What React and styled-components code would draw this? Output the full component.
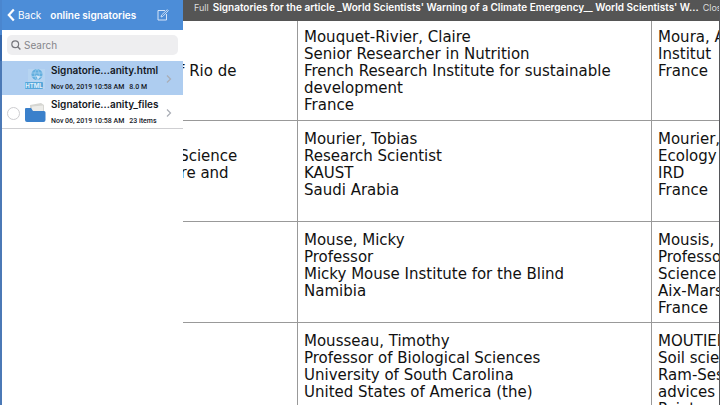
import React from 'react';
import styled, { createGlobalStyle } from 'styled-components';

const GlobalStyle = createGlobalStyle`
  * {
    box-sizing: border-box;
  }

  body {
    margin: 0;
    overflow: hidden;
    background: #ffffff;
  }

  button,
  input {
    border: 0;
    padding: 0;
    background: none;
    font: inherit;
    color: inherit;
  }
`;

export default function App() {
  return (
    <Screen>
      <GlobalStyle />
      <Sidebar>
        <NavBar>
          <BackButton type="button">
            <BackIcon />
            Back
          </BackButton>
          <NavTitle>online signatories</NavTitle>
          <EditButton type="button" aria-label="Edit">
            <EditIcon />
          </EditButton>
        </NavBar>
        <SearchBox>
          <SearchIcon />
          <SearchInput type="search" placeholder="Search" aria-label="Search" />
        </SearchBox>
        <FileList>
          {files.map((file) => (
            <FileRow key={file.name} $selected={file.selected}>
              {file.selected ? (
                <span />
              ) : (
                <Tick type="checkbox" aria-label={file.name} />
              )}
              {file.folder ? <FolderIcon /> : <HtmlIcon />}
              <FileText>
                <FileName>{file.name}</FileName>
                <FileMeta>
                  <span>{file.date}</span>
                  <span>{file.size}</span>
                </FileMeta>
              </FileText>
              <Chevron />
            </FileRow>
          ))}
        </FileList>
      </Sidebar>
      <Viewer>
        <TitleBar>
          <BarButton type="button">Full</BarButton>
          <DocTitle>
            Signatories for the article _World Scientists' Warning of a Climate
            Emergency__ World Scientists' W...
          </DocTitle>
          <BarButton type="button">Close</BarButton>
        </TitleBar>
        <Page>
          <Table>
            <tbody>
              {rows.map((row) => (
                <tr key={row[1][0]}>
                  {row.map((lines, i) => (
                    <Cell key={i}>
                      {lines.map((line, j) => (
                        <Line key={j}>{line}</Line>
                      ))}
                    </Cell>
                  ))}
                </tr>
              ))}
            </tbody>
          </Table>
        </Page>
      </Viewer>
    </Screen>
  );
}

function BackIcon() {
  return (
    <svg width="8" height="14" viewBox="0 0 8 14" fill="none">
      <path d="M6.800 1.500L1.800 7l5 5.500" stroke="#fff" strokeWidth="2.200" />
    </svg>
  );
}

function EditIcon() {
  return (
    <svg width="12" height="12" viewBox="0 0 12 12" fill="none" stroke="#d5e4f7">
      <path d="M8 1.500H1v9.500h8.500V5" />
      <path d="M4 8l.6-2L10.300.7l1 1L5.800 7.400z" strokeWidth="0.9" />
    </svg>
  );
}

function SearchIcon() {
  return (
    <svg width="10" height="10" viewBox="0 0 10 10" fill="none" stroke="#77777c">
      <circle cx="4.200" cy="4.200" r="3.400" strokeWidth="1.200" />
      <path d="M6.700 6.700L9.400 9.400" strokeWidth="1.400" />
    </svg>
  );
}

function HtmlIcon() {
  return (
    <svg width="22" height="22" viewBox="0 0 22 22">
      <rect x="3" y="1" width="17" height="20" fill="#b6d4f1" />
      <circle cx="12" cy="6.500" r="5.500" fill="#62aede" />
      <path
        d="M7 5h10M7 8.500h10M12 1c-3 3-3 8 0 11M12 1c3 3 3 8 0 11"
        fill="none"
        stroke="#a9d2f0"
        strokeWidth="0.7"
      />
      <path d="M11 7l5 2-2 1-1 2z" fill="#d3e7f8" />
      <rect x="0" y="14" width="18" height="7" rx="1" fill="#56a7da" />
      <text
        x="9"
        y="19.500"
        textAnchor="middle"
        fontFamily="Inter, sans-serif"
        fontSize="6"
        fontWeight="700"
        fill="#e3f2fd"
      >
        HTML
      </text>
    </svg>
  );
}

function FolderIcon() {
  return (
    <svg width="22" height="22" viewBox="0 0 22 22">
      <path d="M5 3l11-2 3 2v8H5z" fill="#d6d6d2" />
      <path d="M7 4.500l11-1v8H7z" fill="#ecece9" />
      <path
        d="M0 7q0-1 1-1h5l2 3h11q1.500 0 1.500 1.500V18q0 2-2 2H2q-2 0-2-2z"
        fill="#3a80cb"
      />
    </svg>
  );
}

function Chevron() {
  return (
    <svg width="6" height="10" viewBox="0 0 6 10" fill="none">
      <path d="M1 1.500L4.500 5 1 8.500" stroke="#a9adb5" strokeWidth="1.200" />
    </svg>
  );
}

let uiFont = `Inter, 'Liberation Sans', sans-serif`;

let Screen = styled.div`
  display: grid;
  grid-template-columns: 183px minmax(0, 1fr);
  height: 100vh;
  overflow: hidden;
  border-right: 1px solid #55565a;
`;

let Sidebar = styled.aside`
  padding-left: 2px;
  background: linear-gradient(#4a86cf 35px, #3567ab 35px 61px, #4b79b6 61px)
    0 0 / 2px 100% no-repeat #ffffff;
  font-family: ${uiFont};
`;

let NavBar = styled.header`
  display: flex;
  align-items: center;
  height: 30px;
  padding: 0 14px 0 5px;
  background: #4c8dd8;
  color: #ffffff;
`;

let BackButton = styled.button`
  display: flex;
  align-items: center;
  gap: 3px;
  font-size: 10px;
`;

let NavTitle = styled.h1`
  flex: 1;
  margin: 0 0 0 9px;
  font-size: 10px;
  font-weight: 600;
  white-space: nowrap;
`;

let EditButton = styled.button`
  display: flex;
`;

let SearchBox = styled.label`
  display: flex;
  align-items: center;
  gap: 3px;
  height: 20px;
  margin: 5px 5px 6px;
  padding: 0 4px;
  border-radius: 5px;
  background: #eeeef0;
`;

let SearchInput = styled.input`
  flex: 1;
  min-width: 0;
  outline: none;
  font-size: 10px;

  &::placeholder {
    color: #85858a;
    opacity: 1;
  }
`;

let FileList = styled.ul`
  margin: 0;
  padding: 0;
  list-style: none;
`;

let FileRow = styled.li`
  display: grid;
  grid-template-columns: 14px 22px 1fr 6px;
  align-items: center;
  column-gap: 4px;
  height: 34px;
  padding: 1px 11px 0 5px;
  border-bottom: 1px solid ${(props) => (props.$selected ? '#aecdf0' : '#cfcfd2')};
  background: ${(props) => (props.$selected ? '#aecdf0' : '#ffffff')};
`;

let Tick = styled.input`
  appearance: none;
  width: 13px;
  height: 13px;
  margin: 0;
  border: 1px solid #cdcdd0;
  border-radius: 50%;
`;

let FileText = styled.div`
  min-width: 0;
  color: #14181f;
  white-space: nowrap;
`;

let FileName = styled.div`
  font-size: 10px;
  font-weight: 600;
  line-height: 17px;
`;

let FileMeta = styled.div`
  display: flex;
  gap: 5px;
  font-family: Roboto, sans-serif;
  font-size: 7px;
  font-weight: 500;
  line-height: 17px;
`;

let Viewer = styled.main`
  display: flex;
  flex-direction: column;
  min-width: 0;
  overflow: hidden;
`;

let TitleBar = styled.header`
  display: flex;
  flex: none;
  align-items: center;
  gap: 4px;
  height: 21px;
  padding: 0 0 7px 11px;
  background: #555555;
  color: #ffffff;
  font-family: ${uiFont};
  white-space: nowrap;
`;

let BarButton = styled.button`
  flex: none;
  color: #dddddd;
  font-size: 9px;
`;

let DocTitle = styled.h2`
  margin: 0;
  font-size: 10px;
  font-weight: 600;
`;

let Page = styled.div`
  flex: 1;
  min-height: 0;
  overflow: hidden;
`;

let Table = styled.table`
  margin: -2px 0 0 -29px;
  border-collapse: collapse;
  color: #111111;
  font-family: 'DejaVu Sans', Verdana, sans-serif;
  font-size: 15px;
  line-height: 17px;
`;

let Cell = styled.td`
  height: 101px;
  min-width: 354px;
  padding: 10px 6px 0;
  border: 1px solid #999999;
  border-top: 0;
  vertical-align: top;
  white-space: nowrap;

  &:first-child {
    min-width: 143px;
    padding: 5px 6px 0;
    vertical-align: middle;
  }
`;

let Line = styled.div`
  min-height: 17px;
`;

let files = [
  {
    name: 'Signatorie...anity.html',
    date: 'Nov 06, 2019 10:58 AM',
    size: '8.0 M',
    selected: true,
  },
  {
    name: 'Signatorie...anity_files',
    date: 'Nov 06, 2019 10:58 AM',
    size: '23 items',
    folder: true,
  },
];

let rows = [
  [
    ['l of Rio de'],
    [
      'Mouquet-Rivier, Claire',
      'Senior Researcher in Nutrition',
      'French Research Institute for sustainable',
      'development',
      'France',
    ],
    ['Moura, Ana', 'Institut', 'France'],
  ],
  [
    ['al Science', 'lture and', ''],
    ['Mourier, Tobias', 'Research Scientist', 'KAUST', 'Saudi Arabia'],
    ['Mourier,', 'Ecology', 'IRD', 'France'],
  ],
  [
    [],
    [
      'Mouse, Micky',
      'Professor',
      'Micky Mouse Institute for the Blind',
      'Namibia',
    ],
    ['Mousis,', 'Professor', 'Science', 'Aix-Marseille', 'France'],
  ],
  [
    [],
    [
      'Mousseau, Timothy',
      'Professor of Biological Sciences',
      'University of South Carolina',
      'United States of America (the)',
    ],
    ['MOUTIER', 'Soil scientist', 'Ram-Ses', 'advices', 'Pointe'],
  ],
];
